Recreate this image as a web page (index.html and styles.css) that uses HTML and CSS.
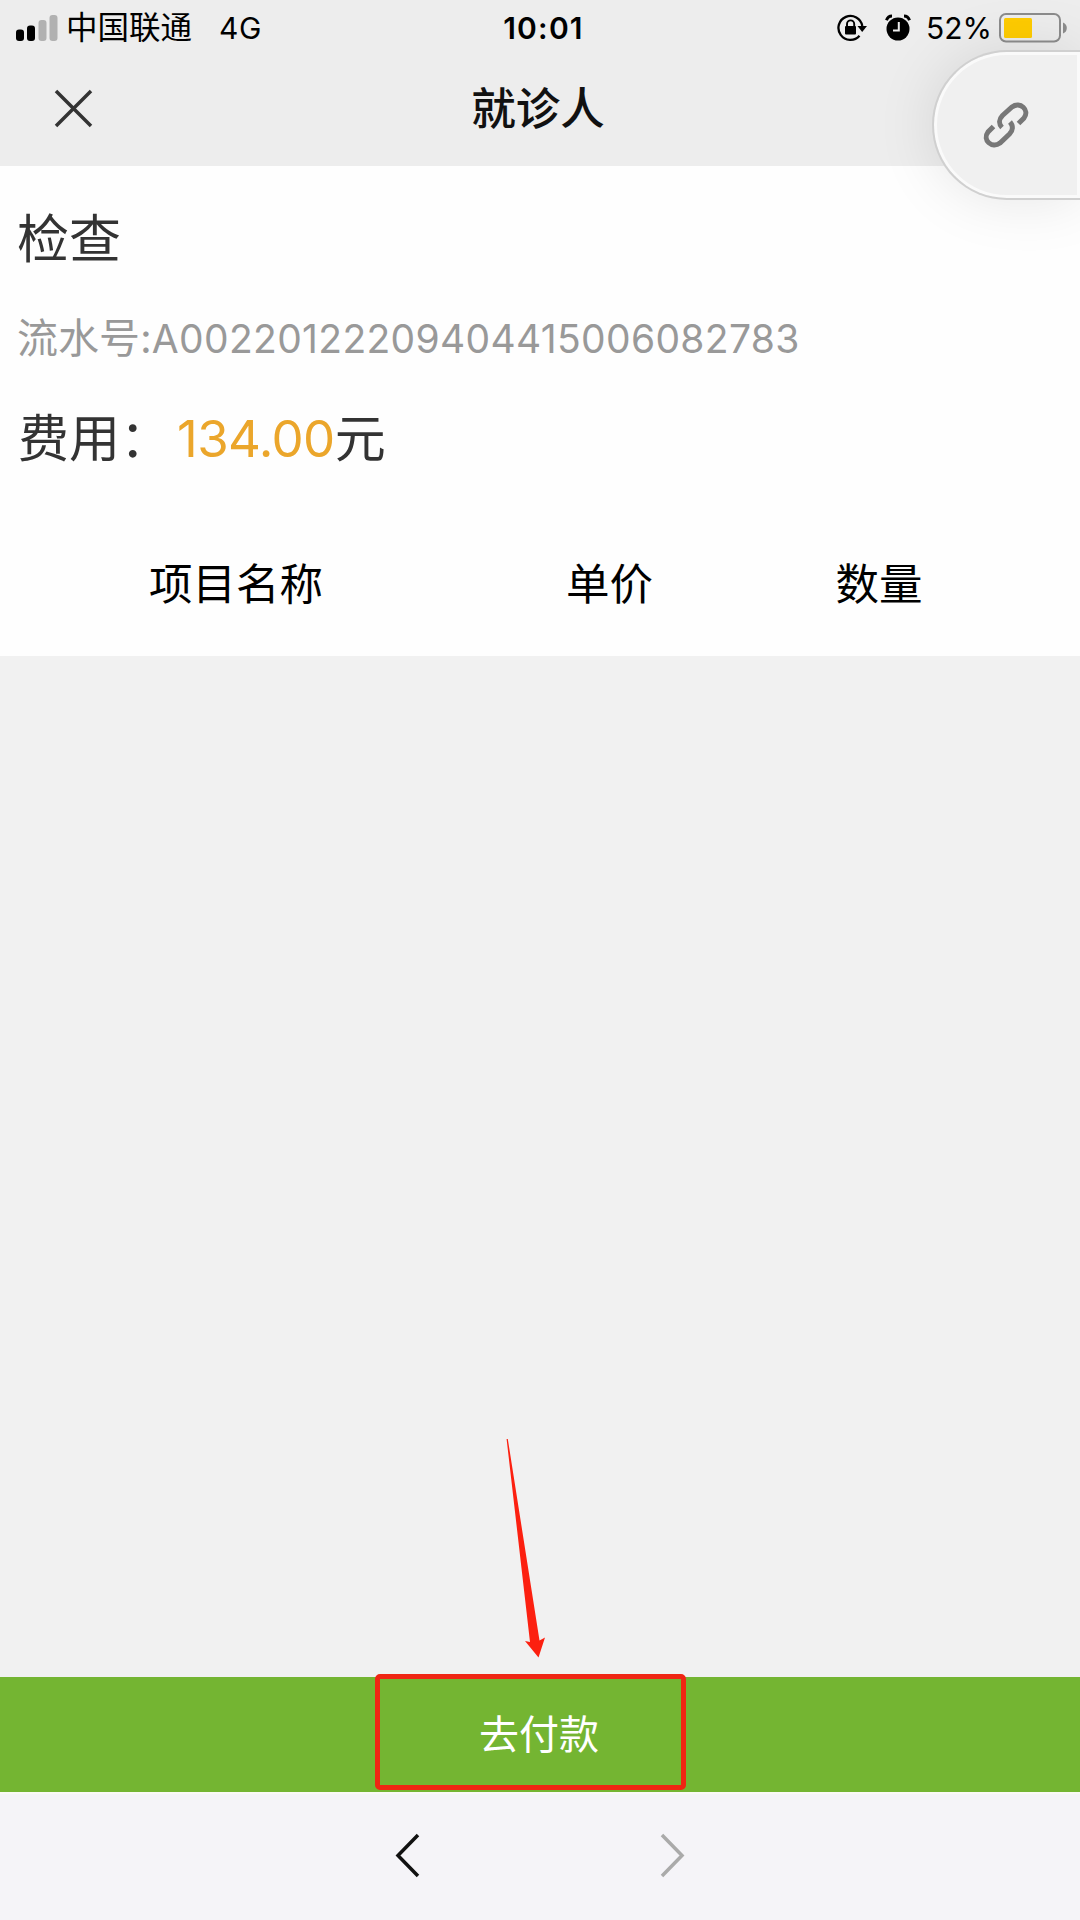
FILE: index.html
```html
<!DOCTYPE html>
<html lang="zh-CN">
<head>
    <meta charset="UTF-8">
    <meta name="viewport" content="width=device-width, initial-scale=1.0">
    <title>就诊人</title>
    <link rel="stylesheet" href="styles.css">
</head>
<body>
    <header class="top">
        <div class="status-bar">
            <div class="status-left">
                <svg class="signal" width="42" height="28" viewBox="0 0 42 28">
                    <rect x="0" y="15.500" width="8" height="11.500" rx="3" fill="#000"/>
                    <rect x="11" y="11.500" width="8" height="15.500" rx="3" fill="#000"/>
                    <rect x="22.500" y="6" width="8" height="21" rx="3" fill="#b1b1b1"/>
                    <rect x="33.500" y="1" width="8" height="26" rx="3" fill="#b1b1b1"/>
                </svg>
                <span class="carrier">中国联通</span>
                <span class="network">4G</span>
            </div>
            <div class="clock">10:01</div>
            <div class="status-right">
                <svg class="lock" width="31" height="28" viewBox="0 0 31 28">
                    <path d="M22.500 21.800A12 12 0 1 1 25.300 12" fill="none" stroke="#000" stroke-width="2.300"/>
                    <path d="M20.500 12h9.500l-4.800 6z"/>
                    <path d="M10 13v-3a3.600 3.600 0 0 1 7.200 0v3" fill="none" stroke="#000" stroke-width="1.900"/>
                    <rect x="8" y="12" width="11" height="8.500" rx="1"/>
                </svg>
                <svg class="alarm" width="26" height="28" viewBox="0 0 26 28">
                    <circle cx="13" cy="15" r="11.500"/>
                    <path d="M1.500 6.200Q3 2 7 2" fill="none" stroke="#000" stroke-width="3"/>
                    <path d="M24.500 6.200Q23 2 19 2" fill="none" stroke="#000" stroke-width="3"/>
                    <path d="M13.800 8v8.500H8" fill="none" stroke="#eee" stroke-width="2"/>
                </svg>
                <span class="percent">52%</span>
                <svg class="battery" width="70" height="32" viewBox="0 0 70 32">
                    <rect x="1" y="2" width="60" height="27.500" rx="6" fill="none" stroke="#8c8c8c" stroke-width="2"/>
                    <rect x="5" y="6" width="28" height="20" rx="1.500" fill="#fc0"/>
                    <path d="M64 10.500q3.800 1.500 3.800 5.500t-3.800 5.500z" fill="#8c8c8c"/>
                </svg>
            </div>
        </div>
        <div class="nav-bar">
            <svg class="close" width="40" height="40" viewBox="0 0 40 40">
                <path d="M2 2l35 35M37 2L2 37" stroke="#333" stroke-width="3.500"/>
            </svg>
            <h1>就诊人</h1>
        </div>
    </header>

    <!-- floating link button -->
    <div class="float-link">
        <svg width="46" height="46" viewBox="0 0 46 46" fill="none" stroke="#777" stroke-width="5">
            <path d="M19 25.500C15.500 22 16 17 19.500 13.500L29 5C37 -1 47 8 41 16L35.500 21.500"/>
            <path d="M27 20C30.500 24 30 28.500 26.500 32L17 41C9 47 -1 38 5 30L10.500 24.500"/>
        </svg>
    </div>

    <main>
        <section class="bill">
            <h2>检查</h2>
            <p class="serial">流水号:<span>A00220122209404415006082783</span></p>
            <p class="fee">费用：<span class="amount">134.00</span>元</p>
            <div class="table-head">
                <span>项目名称</span>
                <span>单价</span>
                <span>数量</span>
            </div>
        </section>
    </main>

    <button class="pay">去付款</button>

    <!-- pointer to the pay button -->
    <svg class="arrow" width="40" height="220" viewBox="0 0 40 220">
        <path d="M.600 0h1.200L33.500 201.500l5.500-3-6.500 20L19 202l5 1z" fill="#fc2010"/>
    </svg>
    <div class="highlight"></div>

    <footer class="toolbar">
        <svg width="26" height="46" viewBox="0 0 26 46">
            <path d="M23 2L3 22.500 23 43" fill="none" stroke="#111" stroke-width="3.500"/>
        </svg>
        <svg width="26" height="46" viewBox="0 0 26 46">
            <path d="M3 2l20 20.500L3 43" fill="none" stroke="#aaa" stroke-width="3.500"/>
        </svg>
    </footer>
</body>
</html>
```
FILE: styles.css
```css
* {
    box-sizing: border-box;
}

body {
    margin: 0;
    height: 1920px;
    display: flex;
    flex-direction: column;
    position: relative;
    overflow: hidden;
    background: #f1f1f1;
    color: #333;
    font-family: Inter, "Noto Sans CJK SC", sans-serif;
}

h1, h2, p {
    margin: 0;
    font-weight: 400;
}

.top {
    height: 166px;
    background: #ededed;
    color: #000;
}

.status-bar {
    display: grid;
    grid-template-columns: 1fr auto 1fr;
    align-items: center;
    height: 54px;
    padding: 0 11px 0 16px;
    font-size: 30px;
    line-height: 54px;
}

.status-left, .status-right {
    display: flex;
    align-items: center;
}

.status-right {
    justify-content: flex-end;
}

.carrier {
    margin-left: 8px;
    font-size: 31.500px;
    line-height: 56px;
}

.network {
    margin-left: 27px;
    letter-spacing: 0.500px;
}

.clock {
    padding-left: 2px;
    font-weight: 600;
    letter-spacing: 1.200px;
}

.alarm {
    margin: 0 15px 0 17px;
}

.percent {
    margin-right: 7px;
}

.nav-bar {
    display: grid;
    grid-template-columns: 1fr auto 1fr;
    align-items: center;
    height: 110px;
}

.close {
    margin-left: 54px;
}

.nav-bar h1 {
    padding-right: 4px;
    font-size: 44.500px;
    line-height: 110px;
    font-weight: 500;
    color: #111;
}

.float-link {
    position: absolute;
    top: 50px;
    right: 0;
    width: 148px;
    height: 150px;
    padding: 50px 0 0 49px;
    border: 2px solid #d0d0d0;
    border-right: 0;
    border-radius: 75px 0 0 75px;
    background: #f0f0f0;
    box-shadow: inset 0 0 0 3px #fafafa, 0 0 60px rgba(0, 0, 0, 0.100);
}

main {
    flex: 1;
}

.bill {
    height: 490px;
    background: #fefefe;
}

.bill h2 {
    padding: 36px 0 0 17px;
    font-size: 52px;
    line-height: 76px;
}

.serial {
    padding: 28px 0 0 17px;
    font-size: 41px;
    line-height: 64px;
    color: #999;
}

.serial span {
    font-size: 39px;
    letter-spacing: 0.330px;
}

.fee {
    padding: 30px 0 0 18px;
    font-size: 51px;
    line-height: 76px;
}

.amount {
    margin-left: 6px;
    letter-spacing: -0.600px;
    color: #eba62b;
}

.table-head {
    display: grid;
    grid-template-columns: 472px 275px 264px;
    padding-top: 75px;
    font-size: 43.500px;
    line-height: 64px;
    text-align: center;
    color: #000;
}

.pay {
    height: 115px;
    padding: 0 2px 5px 0;
    border: 0;
    background: #74b532;
    color: #fff;
    font-family: inherit;
    font-size: 40px;
}

.arrow {
    position: absolute;
    top: 1439px;
    left: 506px;
}

.highlight {
    position: absolute;
    top: 1674px;
    left: 375px;
    width: 311px;
    height: 116px;
    border: 5px solid #ef2613;
    border-radius: 5px;
}

.toolbar {
    display: flex;
    justify-content: center;
    gap: 238px;
    height: 128px;
    padding-top: 39px;
    border-top: 2px solid #fafaf5;
    background: #f5f4f8;
}
```
